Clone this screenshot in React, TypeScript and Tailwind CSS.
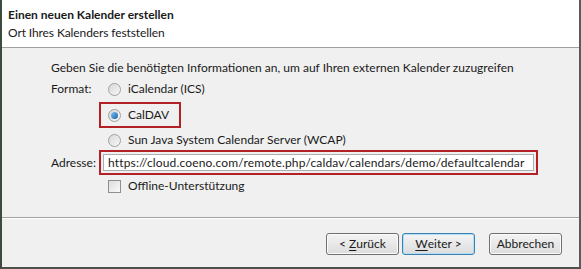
import React from 'react';

const Radio: React.FC<{ checked?: boolean }> = ({ checked }) => (
  <span className="relative inline-flex h-[13px] w-[13px] shrink-0 items-center justify-center rounded-full border border-[#a0a0a0] bg-gradient-to-br from-[#d8d8d8] to-[#f8f8f8]">
    {checked && <span className="h-[7px] w-[7px] rounded-full bg-gradient-to-br from-[#7ec4f0] to-[#1a5fa8]" />}
  </span>
);

const Btn: React.FC<{ children: React.ReactNode; primary?: boolean; className?: string }> = ({ children, primary, className }) => (
  <button
    className={`flex h-[22px] w-[73px] items-center justify-center rounded-[3px] border bg-gradient-to-b from-[#f4f4f4] to-[#dcdcdc] text-[12px] text-[#1a1a1a] ${
      primary ? 'border-[#3c7fb1] shadow-[inset_0_0_0_1px_#aee0f7]' : 'border-[#707070] shadow-[inset_0_0_0_1px_#fbfbfb]'
    } ${className ?? ''}`}
  >
    {children}
  </button>
);

export default function App() {
  return (
    <div
      className="flex h-[269px] w-[581px] flex-col border-b-2 border-l-2 border-r-2 border-b-[#4b524b] border-l-[#3f4a3f] border-r-[#5a5a5a] bg-[#f0f0f0] text-[12px] text-[#1a1a1a]"
      style={{ fontFamily: 'Lato, "Noto Sans", sans-serif' }}
    >
      {/* Header */}
      <div className="flex h-[48px] shrink-0 flex-col border-b border-[#a0a0a0] bg-white pl-[6px] pt-[6px] leading-[18px]">
        <div className="font-bold">Einen neuen Kalender erstellen</div>
        <div className="tracking-[-0.1px]">Ort Ihres Kalenders feststellen</div>
      </div>

      {/* Body */}
      <div className="flex flex-1 flex-col pl-[49px] pt-[12px] leading-[16px]">
        <div>Geben Sie die benötigten Informationen an, um auf Ihren externen Kalender zuzugreifen</div>

        <div className="mt-[5px] flex">
          <div className="w-[56px]">Format:</div>
          <div className="flex flex-col">
            <div className="flex h-[16px] items-center gap-[7px] pl-[1px]">
              <Radio />
              <span>iCalendar (ICS)</span>
            </div>
            <div className="ml-[-8px] mt-[5px] flex h-[26px] w-[82px] items-center gap-[7px] border-2 border-[#b32025] pl-[7px]">
              <Radio checked />
              <span>CalDAV</span>
            </div>
            <div className="mt-[4px] flex h-[16px] items-center gap-[7px] pl-[1px]">
              <Radio />
              <span>Sun Java System Calendar Server (WCAP)</span>
            </div>
          </div>
        </div>

        <div className="mt-[2px] flex items-center">
          <div className="w-[48px]">Adresse:</div>
          <div className="flex h-[25px] w-[439px] items-center border-2 border-[#b32025] p-[2px]">
            <div className="flex h-full w-full items-center border border-[#abadb3] bg-white pl-[4px] tracking-[0.15px]">
              https://cloud.coeno.com/remote.php/caldav/calendars/demo/defaultcalendar
            </div>
          </div>
        </div>

        <div className="ml-[57px] mt-[3px] flex h-[16px] items-center gap-[7px]">
          <span className="h-[13px] w-[13px] border border-[#8f8f8f] bg-gradient-to-br from-[#dcdcdc] to-[#fafafa]" />
          <span>Offline-Unterstützung</span>
        </div>
      </div>

      {/* Footer */}
      <div className="flex h-[50px] shrink-0 items-start justify-end border-t border-[#a0a0a0] pr-[17px] pt-[15px] shadow-[inset_0_1px_0_#fff]">
        <Btn>
          &lt; <span className="ml-[3px] underline underline-offset-2">Z</span>urück
        </Btn>
        <Btn primary className="ml-[3px]">
          <span className="underline underline-offset-2">W</span>eiter &gt;
        </Btn>
        <Btn className="ml-[14px]">Abbrechen</Btn>
      </div>
    </div>
  );
}
